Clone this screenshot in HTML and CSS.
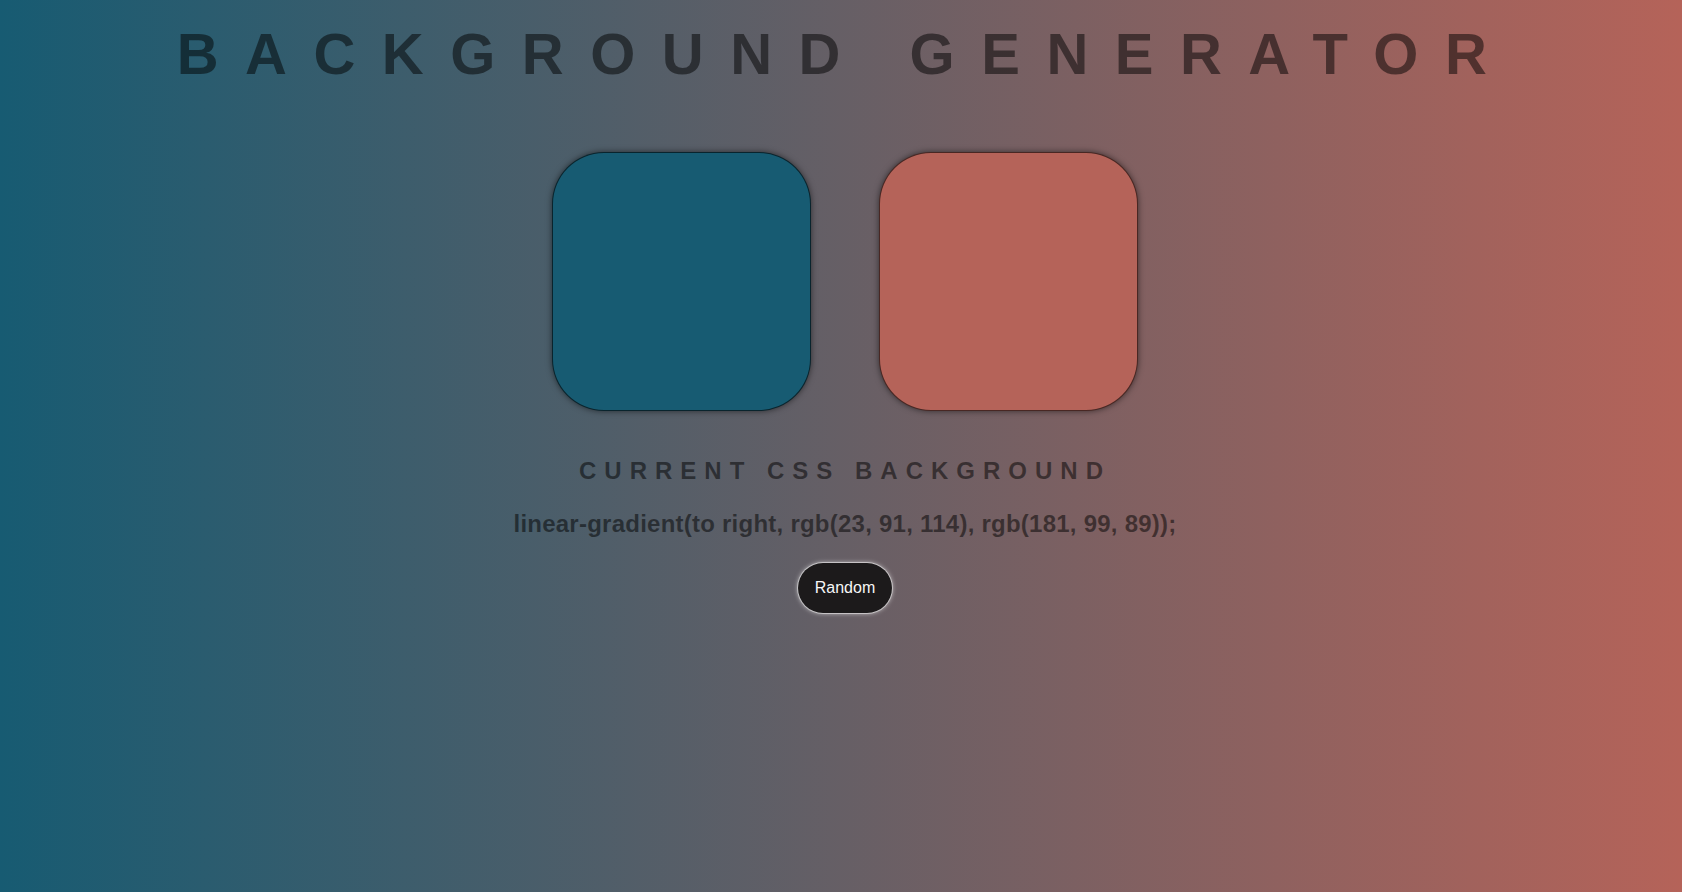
FILE: index.html
```html
<!DOCTYPE html>
<html lang="en">
<head>
<meta charset="utf-8">
<title>Background Generator</title>
<link rel="stylesheet" href="styles.css">
</head>
<body>
<main class="page">
  <h1 class="title">Background Generator</h1>
  <div class="swatches">
    <div class="swatch swatch-one"></div>
    <div class="swatch swatch-two"></div>
  </div>
  <h2 class="label">Current CSS Background</h2>
  <h3 class="css-value">linear-gradient(to right, rgb(23, 91, 114), rgb(181, 99, 89));</h3>
  <button class="random-btn" type="button">Random</button>
</main>
</body>
</html>
```

FILE: styles.css
```css
html, body {
  margin: 0;
  padding: 0;
}

body {
  min-height: 100vh;
  background: linear-gradient(to right, rgb(23, 91, 114), rgb(181, 99, 89));
  font-family: "Liberation Sans", Helvetica, Arial, sans-serif;
  color: rgba(0, 0, 0, 0.5);
  text-align: center;
}

.page {
  display: flex;
  flex-direction: column;
  align-items: center;
  padding-left: 8px;
}

.title {
  margin: 21px 0 0;
  font-size: 58px;
  line-height: 66px;
  font-weight: 700;
  letter-spacing: 26.5px;
  text-transform: uppercase;
  white-space: nowrap;
}

.swatches {
  display: flex;
  justify-content: center;
  gap: 68px;
  margin-top: 65px;
}

.swatch {
  width: 257px;
  height: 257px;
  border: 1px solid rgba(0, 0, 0, 0.6);
  border-radius: 52px;
  box-shadow: 0 0 6px rgba(0, 0, 0, 0.55);
}

.swatch-one {
  background: rgb(23, 91, 114);
}

.swatch-two {
  background: rgb(181, 99, 89);
}

.label {
  margin: 46px 0 0;
  font-size: 24px;
  line-height: 28px;
  font-weight: 700;
  letter-spacing: 8px;
  text-transform: uppercase;
}

.css-value {
  margin: 25px 0 0;
  font-size: 24px;
  line-height: 28px;
  font-weight: 700;
  letter-spacing: 0.01em;
}

.random-btn {
  margin-top: 25px;
  padding: 16px 17px;
  font-family: "Liberation Sans", Helvetica, Arial, sans-serif;
  font-size: 16px;
  line-height: 18px;
  color: #f6f6f6;
  background: #1c1a1b;
  border: none;
  border-radius: 25px;
  box-shadow: 0 0 0 1px rgba(255, 255, 255, 0.45), 0 0 5px rgba(255, 255, 255, 0.75);
  cursor: pointer;
}
```
